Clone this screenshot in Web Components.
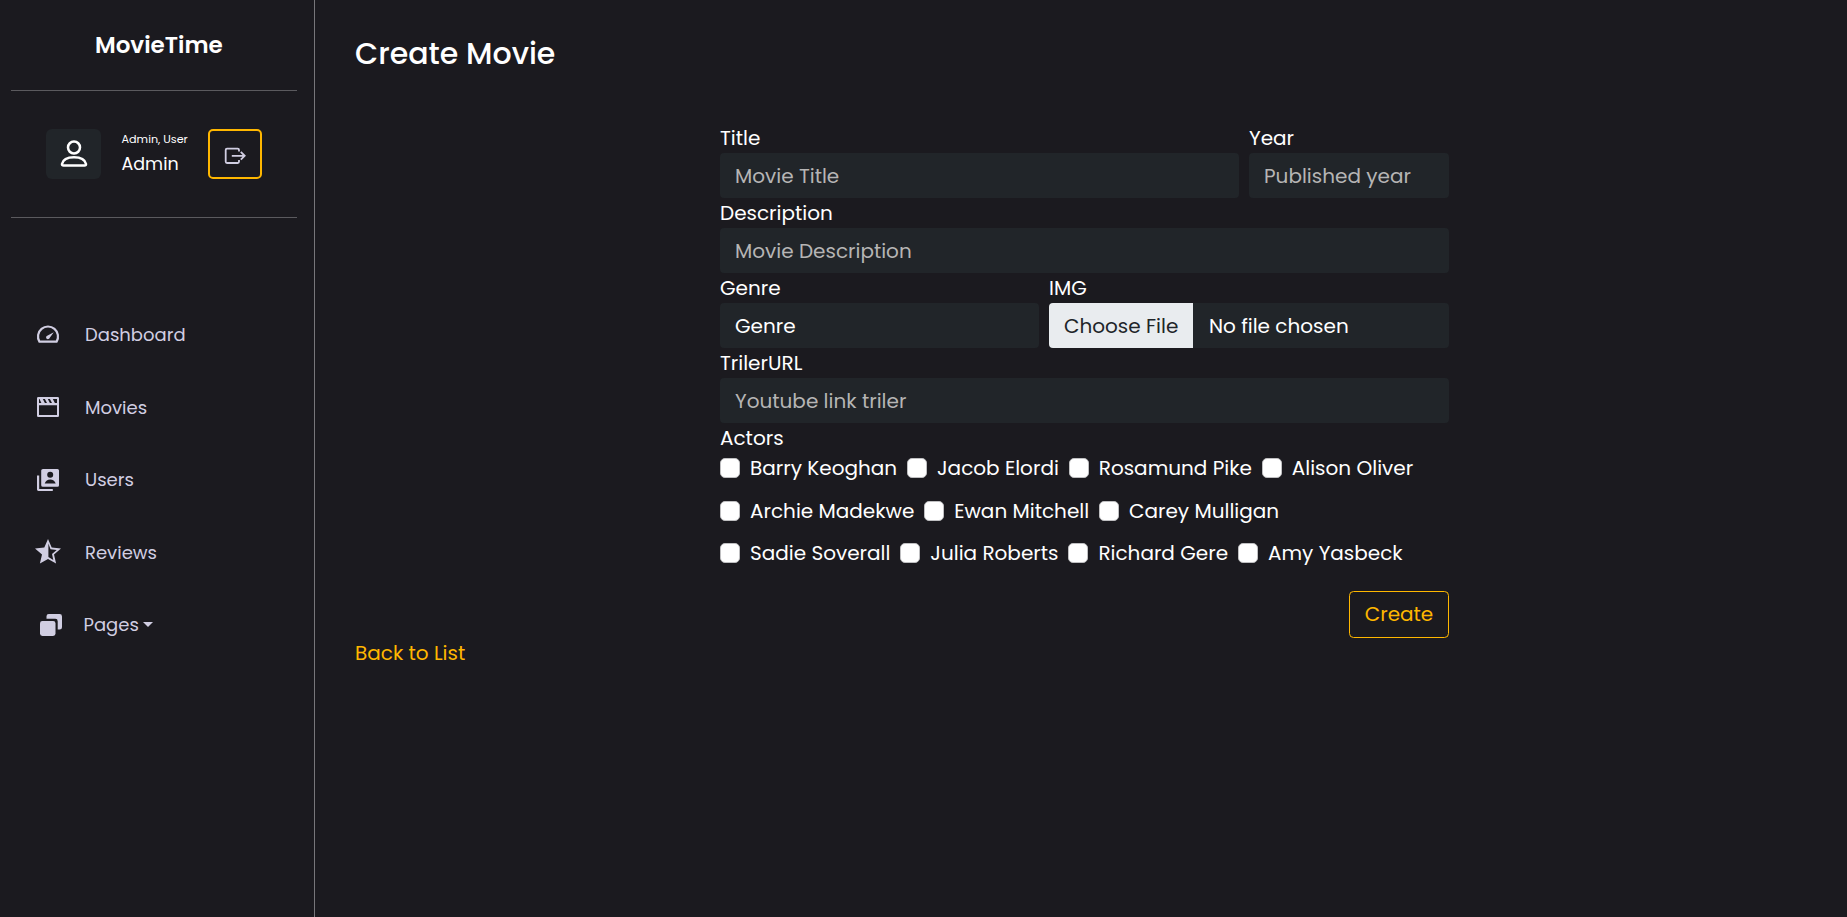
<!DOCTYPE html>
<html lang="en">
<head>
<meta charset="utf-8">
<title>Create Movie - MovieTime</title>
<style>
html,body{margin:0;height:100%;background:#1b1a1f}
body{font-family:Poppins,Inter,"Open Sans",sans-serif;color:#fff;overflow:hidden}
</style>
</head>
<body>
<movie-app></movie-app>
<script>
const define = (name, html, setup) => {
  const tpl = document.createElement('template');
  tpl.innerHTML = html;
  customElements.define(name, class extends HTMLElement {
    constructor(){ super(); this.attachShadow({mode:'open'}).append(tpl.content.cloneNode(true)); }
    connectedCallback(){ if (setup) setup(this, this.shadowRoot); }
  });
};

define('t-run', `<style>:host{display:inline-block;white-space:nowrap}</style><slot></slot>`);

const icons = {
  dashboard: [24,24,`<path d="M3.4 18.6A10 10 0 1 1 20.6 18.6Z" fill="none" stroke="currentColor" stroke-width="2.2" stroke-linejoin="round"/><path d="M17.8 9.2 13.6 14.9a1.8 1.8 0 1 1-2.4-2.2Z"/>`],
  movies: [24,24,`<path fill-rule="evenodd" d="M2.3 1H21.7Q23 1 23 2.3V19.7Q23 21 21.7 21H2.3Q1 21 1 19.7V2.3Q1 1 2.3 1ZM3 9.3V19H21V9.3ZM3 3V7H5.4L3.5 3ZM6.8 3 8.9 7H11L8.9 3ZM11.8 3 13.9 7H16L13.9 3ZM16.8 3 18.9 7H21V3Z"/>`],
  users: [24,24,`<path fill-rule="evenodd" d="M7 1H21.5Q23 1 23 2.5V17.3Q23 18.8 21.5 18.8H7Q5.2 18.8 5.2 17.3V2.5Q5.2 1 7 1ZM14.2 3.8a3 3 0 1 0 0 6 3 3 0 0 0 0-6ZM8.7 15.4H19.7Q18.2 11.5 14.2 11.5T8.7 15.4Z"/><path d="M1 7.4H3.2V20.9H16.8V23H2.4Q1 23 1 21.6Z"/>`],
  reviews: [28,26,`<path fill-rule="evenodd" d="M14 1 17.7 9.6 27 10.4 20 16.6 22.1 25.6 14 20.9 5.9 25.6 8 16.6 1 10.4 10.3 9.6ZM14.4 5.6V18.9L19.3 21.9 18 16 22.7 11.9 16.5 11.3Z"/>`],
  pages: [24,24,`<rect x="1" y="8" width="15.5" height="15" rx="2.4"/><path d="M7.5 5.8V3.3Q7.5 1 9.8 1H20.6Q23 1 23 3.4V14.2Q23 16.5 20.7 16.5H18.7V8.2Q18.7 5.8 16.3 5.8Z"/>`],
  person: [30,30,`<g fill="none" stroke="#fff" stroke-width="2.5"><circle cx="15" cy="8.5" r="6"/><path d="M4.5 26.6H25.5Q27.2 26.6 27 25C26 20.5 21 18.3 15 18.3S4 20.5 3 25Q2.8 26.6 4.5 26.6Z"/></g>`],
  exit: [24,20,`<g fill="none" stroke="currentColor" stroke-width="1.8"><path d="M16 5.5V4Q16 2.7 14.7 2.7H4Q2.7 2.7 2.7 4V15.6Q2.7 17 4 17H14.7Q16 17 16 15.6V14"/><path d="M8.8 9.8H21.6M17.8 5.9 21.7 9.8 17.8 13.7"/></g>`]
};
define('app-icon', `<style>:host{display:block;color:#d1cee2;line-height:0}svg{display:block;fill:currentColor}</style><svg></svg>`, (el, root) => {
  const [w,h,body] = icons[el.getAttribute('name')];
  const svg = root.querySelector('svg');
  svg.setAttribute('viewBox', `0 0 ${w} ${h}`);
  svg.setAttribute('width', w); svg.setAttribute('height', h);
  svg.innerHTML = body;
});

define('nav-item', `<style>
:host{display:flex;align-items:center;height:72.5px;color:#d1cee2;font-size:18px;line-height:28px}
.i{width:49px;padding-left:1px;display:flex}
.t{display:flex;align-items:center}
</style><div class="i"><slot name="icon"></slot></div><div class="t"><slot></slot></div>`);

define('user-card', `<style>
:host{display:flex;align-items:flex-start;height:50px;padding:38px 0 38px 35px}
.a{box-sizing:border-box;width:55px;height:50px;border-radius:6px;background:#212529;display:flex;justify-content:center;padding-top:10px}
.n{width:107px;padding:1px 0 0 20.5px;box-sizing:border-box}
.r{font-size:11.2px;line-height:18px;height:18px}
.u{font-size:17.5px;line-height:27px;height:27px;padding-top:3px}
.b{box-sizing:border-box;width:54px;height:50px;border:2px solid #ffb700;border-radius:5px;display:flex;justify-content:center;align-items:center;padding:4px 1px 0 0}
</style>
<div class="a"><app-icon name="person"></app-icon></div>
<div class="n"><div class="r"><t-run>Admin, User</t-run></div><div class="u"><t-run>Admin</t-run></div></div>
<div class="b"><app-icon name="exit"></app-icon></div>`);

define('side-bar', `<style>
:host{display:flex;flex-direction:column;box-sizing:border-box;width:315px;height:917px;border-right:1px solid #77767a;padding:0 17px 0 11px;flex:none}
.brand{height:90px;font-size:23px;font-weight:600;line-height:34px;box-sizing:border-box;padding:28px 0 0 84px}
hr{border:0;height:1px;background:#5b5a5e;margin:0;width:286px}
nav{padding:81px 0 0 24px}
.caret{width:0;height:0;border:5px solid transparent;border-top-color:#d1cee2;border-bottom:0;margin:-1px 0 0 4px}
.p{margin:-1px 0 0 3px}.pt{margin-left:-1.5px}
.st{margin:-3px 0 0 -2px;width:28px}
</style>
<div class="brand"><t-run>MovieTime</t-run></div><hr>
<user-card></user-card><hr>
<nav>
<nav-item><app-icon slot="icon" name="dashboard"></app-icon><t-run>Dashboard</t-run></nav-item>
<nav-item><app-icon slot="icon" name="movies"></app-icon><t-run>Movies</t-run></nav-item>
<nav-item><app-icon slot="icon" name="users"></app-icon><t-run>Users</t-run></nav-item>
<nav-item><app-icon slot="icon" class="st" name="reviews"></app-icon><t-run>Reviews</t-run></nav-item>
<nav-item><app-icon slot="icon" class="p" name="pages"></app-icon><t-run class="pt">Pages</t-run><span class="caret"></span></nav-item>
</nav>`);

define('form-field', `<style>
:host{display:block;min-width:0;font-size:20px;line-height:30px}
.l,.c{display:flex}.l{height:30px}
.c{height:45px;box-sizing:border-box;border-radius:4px;background:#212529;align-items:center;padding-left:15px;overflow:hidden}
:host([muted]) .c{color:#b6b5b5}
:host([file]) .c{padding-left:0}
</style><div class="l"><slot name="label"></slot></div><div class="c"><slot></slot></div>`);

define('file-picker', `<style>
:host{display:flex;height:45px;line-height:46px}
.b{width:144px;box-sizing:border-box;padding-left:15px;background:#e9ecef;color:#212529;margin-right:16px}
</style><div class="b"><t-run>Choose File</t-run></div><t-run>No file chosen</t-run>`);

define('check-item', `<style>
:host{display:flex;align-items:flex-start;height:30px;font-size:20px;line-height:30px}
i{width:20px;height:20px;box-sizing:border-box;background:#fff;border:1px solid #bfbfc1;border-radius:5px;margin:5px 10px 0 0;flex:none}
</style><i></i><slot></slot>`);

define('movie-form', `<style>
:host{display:block;width:729px;margin:0 auto}
.row{display:grid;column-gap:10px}
.a{grid-template-columns:519px 200px}.b{grid-template-columns:319px 400px}
.al{font-size:20px;line-height:30px;height:30px}
.checks{display:flex;column-gap:9.9px;height:42.6px}
.act{display:flex;justify-content:flex-end;padding-top:10px}
button{width:100px;height:47px;box-sizing:border-box;border:1px solid #ffb700;border-radius:4.5px;background:none;color:#ffb700;font:400 20px/30px Poppins,Inter,"Open Sans",sans-serif;padding:0}
</style>
<div class="row a">
<form-field muted><t-run slot="label">Title</t-run><t-run>Movie Title</t-run></form-field>
<form-field muted><t-run slot="label">Year</t-run><t-run>Published year</t-run></form-field>
</div>
<form-field muted><t-run slot="label">Description</t-run><t-run>Movie Description</t-run></form-field>
<div class="row b">
<form-field><t-run slot="label">Genre</t-run><t-run>Genre</t-run></form-field>
<form-field file><t-run slot="label">IMG</t-run><file-picker></file-picker></form-field>
</div>
<form-field muted><t-run slot="label">TrilerURL</t-run><t-run>Youtube link triler</t-run></form-field>
<div class="al"><t-run>Actors</t-run></div>
<div class="checks"><check-item><t-run>Barry Keoghan</t-run></check-item><check-item><t-run>Jacob Elordi</t-run></check-item><check-item><t-run>Rosamund Pike</t-run></check-item><check-item><t-run>Alison Oliver</t-run></check-item></div>
<div class="checks"><check-item><t-run>Archie Madekwe</t-run></check-item><check-item><t-run>Ewan Mitchell</t-run></check-item><check-item><t-run>Carey Mulligan</t-run></check-item></div>
<div class="checks"><check-item><t-run>Sadie Soverall</t-run></check-item><check-item><t-run>Julia Roberts</t-run></check-item><check-item><t-run>Richard Gere</t-run></check-item><check-item><t-run>Amy Yasbeck</t-run></check-item></div>
<div class="act"><button><t-run>Create</t-run></button></div>`);

define('movie-app', `<style>
:host{display:flex;height:917px}
main{flex:1;padding:0 33px 0 40px}
h1{margin:0;height:123px;box-sizing:border-box;padding-top:31px;font-size:30px;font-weight:500;line-height:45px}
a{display:block;color:#ffb700;font-size:20px;line-height:30px;text-decoration:none}
</style>
<side-bar></side-bar>
<main><h1><t-run>Create Movie</t-run></h1><movie-form></movie-form><a href="#"><t-run>Back to List</t-run></a></main>`);
</script>
</body>
</html>
